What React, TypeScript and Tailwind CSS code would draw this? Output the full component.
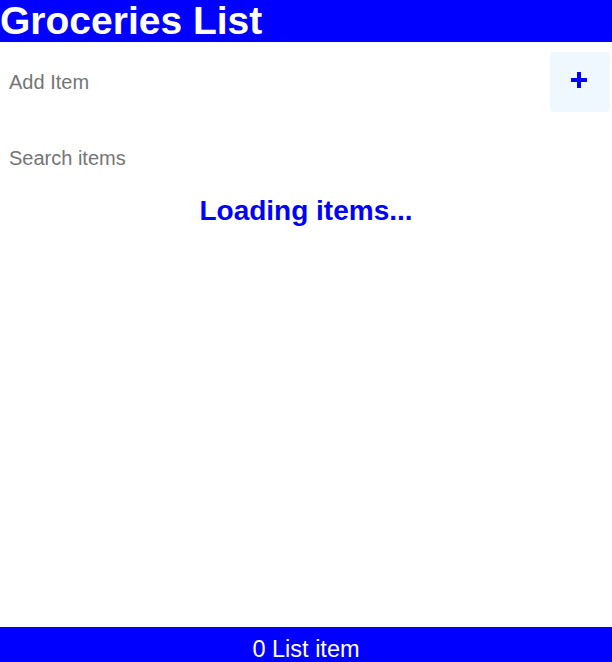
import { useState } from "react";

export default function App() {
  const [newItem, setNewItem] = useState("");
  const [search, setSearch] = useState("");
  const items: string[] = [];

  return (
    <div className="h-screen flex flex-col bg-white font-['Liberation_Sans',Arial,sans-serif]">
      <header className="h-[42px] bg-[#0000ff] text-white flex items-center">
        <h1 className="text-[39px] font-bold leading-none -mt-[1px]">Groceries List</h1>
      </header>

      <form
        className="flex items-center pt-[10px]"
        onSubmit={e => e.preventDefault()}
      >
        <input
          autoFocus
          type="text"
          placeholder="Add Item"
          value={newItem}
          onChange={e => setNewItem(e.target.value)}
          className="flex-1 h-[60px] pl-[9px] text-[20px] text-black caret-[#000080] placeholder:text-[#757575] outline-none"
        />
        <button
          type="submit"
          aria-label="Add Item"
          className="w-[60px] h-[60px] mr-[2px] rounded-[4px] bg-[#f0f8ff] flex items-center justify-center"
        >
          <svg width="18" height="18" viewBox="0 0 18 18" className="-mt-[5px] -ml-[2px]">
            <path d="M9 1v16M1 9h16" stroke="#0000ff" strokeWidth="4" />
          </svg>
        </button>
      </form>

      <form className="mt-[16px]" onSubmit={e => e.preventDefault()}>
        <input
          type="text"
          placeholder="Search items"
          value={search}
          onChange={e => setSearch(e.target.value)}
          className="w-full h-[60px] pl-[9px] text-[20px] text-black placeholder:text-[#757575] outline-none"
        />
      </form>

      <main className="flex-1 flex flex-col items-center">
        <p className="mt-[7px] text-[28px] leading-[32px] font-bold text-[#0000ff]">
          Loading items...
        </p>
      </main>

      <footer className="h-[35px] bg-[#0000ff] text-white flex items-center justify-center">
        <p className="text-[23.5px] leading-none mt-[10px]">
          {items.length} List item
        </p>
      </footer>
    </div>
  );
}
